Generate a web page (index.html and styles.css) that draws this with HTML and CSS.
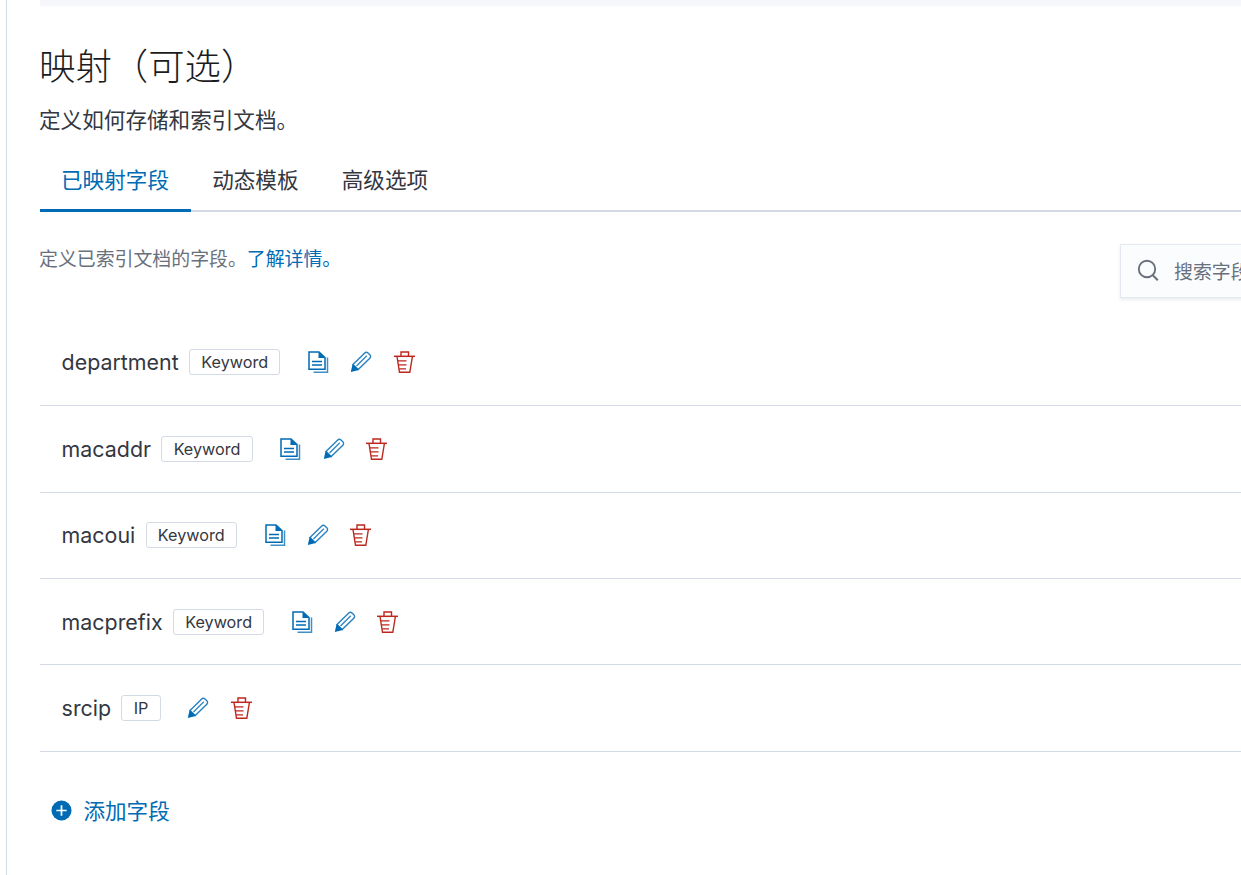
FILE: index.html
```html
<!DOCTYPE html>
<html lang="zh-CN">
<head>
<meta charset="utf-8">
<title>映射（可选）</title>
<link rel="stylesheet" href="styles.css">
</head>
<body>
<svg class="defs" width="0" height="0" aria-hidden="true">
  <symbol id="i-doc" viewBox="0 0 22 22">
    <path d="M2 1H12L18 6.5V18.3H2Z" fill="none" stroke="currentColor" stroke-width="1.5"/>
    <path d="M11.5 1V7H18Z" fill="currentColor"/>
    <path d="M5 10.5H15M5 14H15" stroke="currentColor" stroke-width="1.4"/>
    <path d="M20.5 6.5V21.3H6.5" fill="none" stroke="currentColor" stroke-width="1.5" stroke-opacity=".75"/>
  </symbol>
  <symbol id="i-pencil" viewBox="0 0 22 22">
    <path d="M3 13.5L14.5 2.2C15.6 1.1 17 1.1 18 2L19.8 3.8C20.8 4.8 20.8 6.2 19.8 7.2L8.2 18.6Z" fill="none" stroke="currentColor" stroke-width="1.4" stroke-opacity=".85"/>
    <path d="M6.5 15L16.8 4.8" stroke="currentColor" stroke-width="1.2" stroke-opacity=".85"/>
    <path d="M2.6 13L8.8 19L0.8 21Z" fill="currentColor"/>
  </symbol>
  <symbol id="i-trash" viewBox="0 0 22 22">
    <path d="M0 5.3H21" stroke="currentColor" stroke-width="1.5"/>
    <path d="M7 5V1H14.5V5" fill="none" stroke="currentColor" stroke-width="1.4"/>
    <path d="M3 5.5L5.5 21.3H15.8L18.4 5.5" fill="none" stroke="currentColor" stroke-width="1.4"/>
    <path d="M4 9.8H12.5M4.8 13.8H12.5M5.2 17.8H12" stroke="currentColor" stroke-width="1.3"/>
  </symbol>
</svg>
<main class="page">
  <div class="strip"></div>
  <h1 class="title">映射（可选）</h1>
  <p class="lead">定义如何存储和索引文档。</p>
  <nav class="tabs">
    <a class="tab tab-active">已映射字段</a>
    <a class="tab">动态模板</a>
    <a class="tab">高级选项</a>
  </nav>
  <div class="toolbar">
    <p class="help">定义已索引文档的字段。<a class="link">了解详情。</a></p>
    <div class="search">
      <svg class="search-icon" viewBox="0 0 22 22"><circle cx="10" cy="10" r="8.2" fill="none" stroke="currentColor" stroke-width="1.9"/><path d="M15.5 16L20.8 21.3" stroke="currentColor" stroke-width="2"/></svg>
      <span class="search-text">搜索字段</span>
    </div>
  </div>
  <ul class="fields">
    <li class="field">
      <span class="name">department</span><span class="badge">Keyword</span>
      <span class="actions">
        <button class="act blue"><svg class="icon"><use href="#i-doc"/></svg></button>
        <button class="act blue"><svg class="icon"><use href="#i-pencil"/></svg></button>
        <button class="act red"><svg class="icon"><use href="#i-trash"/></svg></button>
      </span>
    </li>
    <li class="field">
      <span class="name">macaddr</span><span class="badge">Keyword</span>
      <span class="actions">
        <button class="act blue"><svg class="icon"><use href="#i-doc"/></svg></button>
        <button class="act blue"><svg class="icon"><use href="#i-pencil"/></svg></button>
        <button class="act red"><svg class="icon"><use href="#i-trash"/></svg></button>
      </span>
    </li>
    <li class="field">
      <span class="name">macoui</span><span class="badge">Keyword</span>
      <span class="actions">
        <button class="act blue"><svg class="icon"><use href="#i-doc"/></svg></button>
        <button class="act blue"><svg class="icon"><use href="#i-pencil"/></svg></button>
        <button class="act red"><svg class="icon"><use href="#i-trash"/></svg></button>
      </span>
    </li>
    <li class="field">
      <span class="name">macprefix</span><span class="badge">Keyword</span>
      <span class="actions">
        <button class="act blue"><svg class="icon"><use href="#i-doc"/></svg></button>
        <button class="act blue"><svg class="icon"><use href="#i-pencil"/></svg></button>
        <button class="act red"><svg class="icon"><use href="#i-trash"/></svg></button>
      </span>
    </li>
    <li class="field">
      <span class="name">srcip</span><span class="badge">IP</span>
      <span class="actions">
        <button class="act blue"><svg class="icon"><use href="#i-pencil"/></svg></button>
        <button class="act red"><svg class="icon"><use href="#i-trash"/></svg></button>
      </span>
    </li>
  </ul>
  <a class="add">
    <svg class="add-icon" viewBox="0 0 22 22"><circle cx="11" cy="11" r="10.5" fill="currentColor"/><path d="M11 5.6V16.4M5.6 11H16.4" stroke="#fff" stroke-width="1.8"/></svg>
    <span>添加字段</span>
  </a>
</main>
</body>
</html>
```
FILE: styles.css
```css
html, body {
  margin: 0;
  padding: 0;
  height: 875px;
  overflow: hidden;
  background: #fff;
}
body {
  font-family: Inter, "Noto Sans CJK SC", sans-serif;
  color: #343741;
}
.defs { position: absolute; }
.page {
  box-sizing: border-box;
  width: 1600px;
  height: 875px;
  margin-left: 6px;
  border-left: 1px solid #d3dae6;
  padding-left: 33px;
}
.strip {
  width: 1400px;
  height: 6px;
  background: #f5f7fa;
}
.title {
  margin: 34px 0 0;
  font-size: 36.4px;
  line-height: 54px;
  font-weight: 300;
  color: #1a1c21;
  text-indent: -1px;
}
.lead {
  margin: 10px 0 0;
  font-size: 21.6px;
  line-height: 32px;
  color: #343741;
  text-indent: -1px;
}
.tabs {
  display: flex;
  width: 1400px;
  height: 66px;
  margin-top: 10px;
  border-bottom: 2px solid #d3dae6;
  box-sizing: border-box;
}
.tab {
  display: flex;
  align-items: center;
  height: 64px;
  padding: 0 22.2px 0 21px;
  font-size: 21.6px;
  color: #343741;
  box-sizing: border-box;
}
.tab-active {
  height: 66px;
  padding-top: 1px;
  color: #006bb4;
  border-bottom: 3px solid #006bb4;
}
.toolbar {
  display: flex;
  justify-content: space-between;
  align-items: flex-start;
  width: 1400px;
  margin-top: 32px;
}
.help {
  margin: 1px 0 0;
  font-size: 18.9px;
  line-height: 30px;
  color: #69707d;
  text-indent: -1px;
}
.link { color: #006bb4; }
.search {
  display: flex;
  align-items: center;
  box-sizing: border-box;
  width: 320px;
  height: 54px;
  padding: 0 0 2px 16px;
  background: #fbfcfd;
  border: 1px solid #e4e8f0;
  box-shadow: 0 2px 3px rgba(152, 162, 179, .2);
}
.search-icon {
  width: 22px;
  height: 22px;
  color: #69707d;
}
.search-text {
  margin-left: 15px;
  font-size: 18.9px;
  color: #69707d;
}
.fields {
  list-style: none;
  width: 1400px;
  margin: 21.8px 0 0;
  padding: 0;
}
.field {
  display: flex;
  align-items: center;
  box-sizing: border-box;
  height: 86.4px;
  padding: 0 0 0 21.6px;
  border-bottom: 1px solid #d3dae6;
}
.name {
  font-size: 21.4px;
  color: #343741;
}
.badge {
  box-sizing: border-box;
  height: 26px;
  margin-left: 10.4px;
  padding: 0 11.2px;
  border: 1px solid #d3dae6;
  border-radius: 3px;
  font-size: 16.2px;
  line-height: 24px;
  color: #343741;
  background: #fff;
}
.actions {
  display: flex;
  margin-left: 16.2px;
}
.act {
  display: flex;
  align-items: center;
  justify-content: center;
  width: 43.2px;
  height: 43.2px;
  padding: 0;
  border: 0;
  background: none;
}
.blue { color: #006bb4; }
.red { color: #bd271e; }
.icon {
  width: 22px;
  height: 22px;
}
.add {
  display: flex;
  align-items: center;
  gap: 11.4px;
  margin: 42px 0 0 11px;
  font-size: 21.6px;
  line-height: 34px;
  color: #006bb4;
}
.add-icon {
  width: 21px;
  height: 21px;
}
```
